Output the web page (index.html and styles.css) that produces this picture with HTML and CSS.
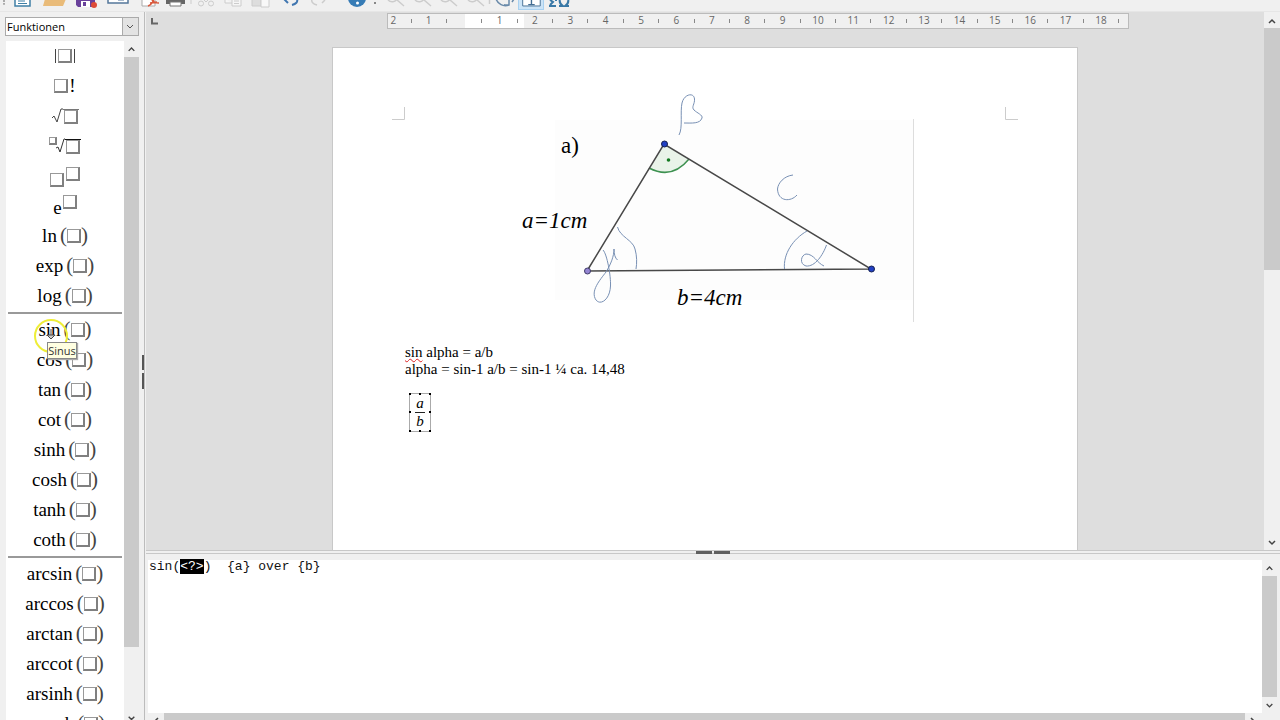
FILE: index.html
```
<!DOCTYPE html>
<html lang="de">
<head>
<meta charset="utf-8">
<title>Formel bearbeiten</title>
<link rel="stylesheet" href="styles.css">
</head>
<body>
<header class="toolbar">
  <span class="grip"></span>
  <button class="tool wide" aria-label="Neu"><svg viewBox="6 0 32 11"><path d="M15 -2V6H30V-2" fill="#fff" stroke="#3f7fa5" stroke-width="1.5"/><path d="M18 1h7M18 3.500h9" stroke="#3f7fa5"/></svg></button>
  <button class="tool wide" aria-label="Öffnen"><svg viewBox="38 0 32 11"><path d="M45 -1H66L63 6H43Z" fill="#e9bb79"/></svg></button>
  <button class="tool wide" aria-label="Speichern"><svg viewBox="70 0 32 11"><path d="M76 -1H95V7H78L76 5Z" fill="#69419b"/><path d="M81 1h9v6h-9z" fill="#fff"/><path d="M83 2h3v4h-3z" fill="#69419b"/><circle cx="94" cy="5" r="3" fill="#dd4b37"/></svg></button>
  <button class="tool wide" aria-label="E-Mail"><svg viewBox="102 0 32 11"><path d="M108 -2V3H128V-2" fill="#fff" stroke="#54779b" stroke-width="1.500"/><path d="M118 0h6" stroke="#54779b"/></svg></button>
  <button class="tool" aria-label="PDF exportieren"><svg viewBox="134 0 28 11"><path d="M142 -1V6H155V-1" fill="#fff" stroke="#aaa"/><path d="M148 6C151 5 153 2 154 -1M152 0C153 2 156 3 159 3M150 3l7-1" fill="none" stroke="#d9593d" stroke-width="1.500"/></svg></button>
  <button class="tool" aria-label="Drucken"><svg viewBox="162 0 28 11"><path d="M166 -1H185V4H166Z" fill="#666"/><path d="M170 2h11v4h-11z" fill="#fff" stroke="#777"/></svg></button>
  <button class="tool" aria-label="Ausschneiden"><svg viewBox="190 0 28 11" fill="none" stroke="#ccc"><path d="M191 0v4M203 -1L206 2L209 -1"/><circle cx="201" cy="3.500" r="2.500"/><circle cx="211" cy="3.500" r="2.500"/></svg></button>
  <button class="tool" aria-label="Kopieren"><svg viewBox="218 0 28 11" fill="#f6f6f6" stroke="#ccc"><path d="M225 -1V3H232M232 -1H241V6H232ZM234 1h5M234 3.500h5"/></svg></button>
  <button class="tool" aria-label="Einfügen"><svg viewBox="246 0 28 11" stroke="#ccc"><path d="M252 -1V6H261V-1Z" fill="#ddd"/><path d="M261 -1H269V7H261Z" fill="#f8f8f8"/></svg></button>
  <button class="tool" aria-label="Rückgängig"><svg viewBox="274 0 28 11" fill="none" stroke="#4076b0" stroke-width="2"><path d="M284 -1L288 3M297 -1C298 2 296 4 292 5"/></svg></button>
  <button class="tool" aria-label="Wiederholen"><svg viewBox="302 0 28 11" fill="none" stroke="#ccc" stroke-width="1.500"><path d="M312 -1C311 2 313 4 317 5M325 0L322 3"/></svg></button>
  <span class="divider"></span>
  <button class="tool" aria-label="Suchen"><svg viewBox="342 0 28 11"><circle cx="357" cy="-2" r="9" fill="#377cb6"/><circle cx="357.500" cy="3" r="1.500" fill="#fff"/></svg></button>
  <span class="grip second"></span>
  <button class="tool" aria-label="Vergrößern"><svg viewBox="380 0 28 11" fill="none" stroke="#ccc" stroke-width="1.500"><path d="M388 0C391 3 395 2 397 -1M397 0L404 6"/></svg></button>
  <button class="tool" aria-label="Verkleinern"><svg viewBox="408 0 28 11" fill="none" stroke="#ccc" stroke-width="1.500"><path d="M415 0C418 3 422 2 424 -1M424 0L431 6"/></svg></button>
  <button class="tool" aria-label="Zoom 100%"><svg viewBox="436 0 28 11" fill="none" stroke="#ccc" stroke-width="1.500"><path d="M441 0C444 3 448 2 450 -1M450 0L457 6"/></svg></button>
  <button class="tool" aria-label="Alles zeigen"><svg viewBox="464 0 28 11" fill="none" stroke="#ccc" stroke-width="1.500"><path d="M468 0C471 3 475 2 477 -1M477 0L484 6M489.500 -1V4" /></svg></button>
  <button class="tool narrow" aria-label="Aktualisieren"><svg viewBox="492 0 26 11" fill="none" stroke="#6889a9" stroke-width="1.500"><path d="M496 -1C498 4 503 7 509 5V0M509 5H504M512 2L514 -1"/></svg></button>
  <button class="tool narrow active" aria-label="Formelcursor"><svg viewBox="518 0 26 11"><path d="M522 -1H541V6H522Z" fill="#fff" stroke="#426d93"/><path d="M531.500 -1V4M528 4.500H535" stroke="#426d93" stroke-width="1.500"/></svg></button>
  <button class="tool" aria-label="Symbole"><svg viewBox="544 0 28 11" fill="none" stroke="#3978a6" stroke-width="2"><path d="M549 6H556M550 0L553 2L550 5M556 0V1M559 6H563C560 4 559 2 560 -1M569 6H565C568 4 569 2 568 -1"/></svg></button>
</header>

<div class="main">
  <aside class="elements">
    <select class="category" aria-label="Kategorie"><option>Funktionen</option></select>
    <div class="list-area">
      <div class="list">
        <button class="item" aria-label="Betrag"><span class="bar"></span><i class="box"></i><span class="bar"></span></button>
        <button class="item"><i class="box"></i><span class="bang">!</span></button>
        <button class="item" aria-label="Quadratwurzel"><svg class="root" width="12" height="16" viewBox="0 0 12 16"><path d="M1 10L3 8L6 14L10 1H12" fill="none" stroke="#444"/></svg><span class="radicand"><i class="box"></i></span></button>
        <button class="item" aria-label="n-te Wurzel"><i class="box small"></i><svg class="root" width="12" height="16" viewBox="0 0 12 16"><path d="M3 10L5 9L7 14L11 1H12" fill="none" stroke="#333"/></svg><span class="radicand dark"><i class="box"></i></span></button>
        <button class="item" aria-label="Potenz"><i class="box low"></i><i class="box high"></i></button>
        <button class="item"><span class="base">e</span><i class="box high exponent"></i></button>
        <button class="item">ln<span class="paren open">(</span><i class="box"></i><span class="paren">)</span></button>
        <button class="item">exp<span class="paren open">(</span><i class="box"></i><span class="paren">)</span></button>
        <button class="item">log<span class="paren open">(</span><i class="box"></i><span class="paren">)</span></button>
        <hr class="rule">
        <button class="item">sin<span class="paren open">(</span><i class="box"></i><span class="paren">)</span></button>
        <button class="item">cos<span class="paren open">(</span><i class="box"></i><span class="paren">)</span></button>
        <button class="item">tan<span class="paren open">(</span><i class="box"></i><span class="paren">)</span></button>
        <button class="item">cot<span class="paren open">(</span><i class="box"></i><span class="paren">)</span></button>
        <button class="item">sinh<span class="paren open">(</span><i class="box"></i><span class="paren">)</span></button>
        <button class="item">cosh<span class="paren open">(</span><i class="box"></i><span class="paren">)</span></button>
        <button class="item">tanh<span class="paren open">(</span><i class="box"></i><span class="paren">)</span></button>
        <button class="item">coth<span class="paren open">(</span><i class="box"></i><span class="paren">)</span></button>
        <hr class="rule">
        <button class="item">arcsin<span class="paren open">(</span><i class="box"></i><span class="paren">)</span></button>
        <button class="item">arccos<span class="paren open">(</span><i class="box"></i><span class="paren">)</span></button>
        <button class="item">arctan<span class="paren open">(</span><i class="box"></i><span class="paren">)</span></button>
        <button class="item">arccot<span class="paren open">(</span><i class="box"></i><span class="paren">)</span></button>
        <button class="item">arsinh<span class="paren open">(</span><i class="box"></i><span class="paren">)</span></button>
        <button class="item">arcosh<span class="paren open">(</span><i class="box"></i><span class="paren">)</span></button>
      </div>
      <div class="vbar">
        <svg class="arrow" viewBox="0 0 16 16"><path d="M5 10L8 7L11 10"/></svg>
        <div class="thumb list-thumb"></div>
        <svg class="arrow end" viewBox="0 0 16 16"><path d="M5 13L8 16L11 13"/></svg>
      </div>
    </div>
    <span class="side-knob"></span>
    <svg class="pointer" width="36" height="36" viewBox="0 0 36 36"><circle cx="18" cy="18" r="16" fill="none" stroke="#eeee38" stroke-width="2"/><path d="M18 11V17M14 17L18 21L22 17Z" fill="#ccc" stroke="#444"/></svg>
    <span class="tooltip" role="tooltip">Sinus</span>
  </aside>

  <div class="workspace">
    <section class="document">
      <div class="canvas">
        <svg class="tab-mark" width="8" height="7" viewBox="0 0 8 7"><path d="M1 0V5.500H7" fill="none" stroke="#666" stroke-width="2"/></svg>
        <div class="ruler">
          <div class="scale">
            <span>2</span><i></i><span>1</span><i></i><span></span><i></i><span>1</span><i></i><span>2</span><i></i><span>3</span><i></i><span>4</span><i></i><span>5</span><i></i><span>6</span><i></i><span>7</span><i></i><span>8</span><i></i><span>9</span><i></i><span>10</span><i></i><span>11</span><i></i><span>12</span><i></i><span>13</span><i></i><span>14</span><i></i><span>15</span><i></i><span>16</span><i></i><span>17</span><i></i><span>18</span><i></i>
          </div>
        </div>
        <article class="page">
          <svg class="figure" viewBox="333 48 744 290">
            <g fill="none" stroke="#ccc"><path d="M404.500 107V119.500H392M1005.500 107V119.500H1018"/></g>
            <path d="M555 120H914V300H555Z" fill="#fdfdfd"/>
            <path d="M913.500 119V322" stroke="#ddd"/>
            <path d="M664 144L649 169Q671 179 688 159Z" fill="#e9f3e9"/>
            <path d="M649 168Q672 180 689 159" fill="none" stroke="#3d9150" stroke-width="1.500"/>
            <path d="M587 271L664 144L871 269Z" fill="none" stroke="#484848" stroke-width="1.500"/>
            <circle cx="668.500" cy="160" r="1.800" fill="#147a22"/>
            <circle cx="664.500" cy="144" r="3" fill="#2140c4" stroke="#152050"/>
            <circle cx="871.500" cy="269" r="3" fill="#2140c4" stroke="#152050"/>
            <circle cx="587.500" cy="271" r="3" fill="#9485d3" stroke="#403c68"/>
            <g fill="none" stroke="#7890b4">
              <path d="M679 135C683 128 680 112 682 103C684 94 694 92 694.500 99C695 104 691 107 694 110C697 113 703 115 702 118C700 124 692 123 684 123"/>
              <path d="M793 175C784 176 778 183 777.500 189C778 202 791 202 797 195"/>
              <path d="M617.500 227C620 237 633 240 635 249C637 256 637 263 636 269"/>
              <path d="M603 250C607 254 611 276 610.500 286C610 299 601 306 596 300C590 291 600 280 606 272C611 264 614 256 614 249C614 254 615 258 617.500 260"/>
              <path d="M807 231C793 239 783 254 784.500 269"/>
              <path d="M826.500 245C823 255 815 267 806 266C799 264 801 255 806 254C814 254 817 263 824 266"/>
            </g>
            <text class="label" x="561" y="153">a)</text>
            <text class="label slanted" x="522" y="228">a=1cm</text>
            <text class="label slanted" x="677" y="305">b=4cm</text>
          </svg>
          <p class="line"><span class="misspelt">sin</span> alpha = a/b</p>
          <p class="line">alpha = sin-1 a/b = sin-1 ¼ ca. 14,48</p>
          <div class="formula"><span class="numerator">a</span><span>b</span>
            <svg class="handles" viewBox="0 0 22 39"><path d="M0 0h2v2H0zM10 0h2v2h-2zM20 0h2v2h-2zM0 18h2v2H0zM20 18h2v2h-2zM0 37h2v2H0zM10 37h2v2h-2zM20 37h2v2h-2z"/></svg>
          </div>
        </article>
      </div>
      <div class="vbar">
        <svg class="arrow" viewBox="0 0 16 16"><path d="M5 11L8 8L11 11"/></svg>
        <div class="thumb doc-thumb"></div>
        <svg class="arrow end" viewBox="0 0 16 16"><path d="M5 7L8 10L11 7"/></svg>
      </div>
    </section>
    <div class="splitter"><span class="knob"></span><span class="knob"></span></div>
    <section class="command">
      <div class="command-row">
        <div class="editor" role="textbox" aria-multiline="true" aria-label="Formeltext" contenteditable="true" spellcheck="false">sin(<mark>&lt;?&gt;</mark>)  {a} over {b}</div>
        <div class="vbar">
          <svg class="arrow" viewBox="0 0 16 16"><path d="M5 10L8 7L11 10"/></svg>
          <div class="thumb fill"></div>
          <svg class="arrow" viewBox="0 0 16 16"><path d="M5 7L8 10L11 7"/></svg>
        </div>
      </div>
      <div class="hbar">
        <svg class="arrow" viewBox="0 0 16 16"><path d="M10 5L7 8L10 11"/></svg>
        <div class="thumb fill"></div>
        <svg class="arrow" viewBox="0 0 16 16"><path d="M6 5L9 8L6 11"/></svg>
      </div>
    </section>
  </div>
</div>
</body>
</html>
```

FILE: styles.css
```
* { box-sizing: border-box; }
body {
  margin: 0;
  height: 100vh;
  display: flex;
  flex-direction: column;
  overflow: hidden;
  background: #f0f0f0;
  color: #000;
  font-family: "Open Sans", "Noto Sans", sans-serif;
  font-size: 11px;
}
button { border: 0; padding: 0; margin: 0; background: none; color: inherit; }

/* Toolbar */
.toolbar { display: flex; flex: none; height: 12px; padding-left: 3px; overflow: hidden; border-bottom: 1px solid #e6e6e6; }
.grip { width: 3px; height: 5px; border-left: 2px dotted #aaa; }
.grip.second { width: 10px; border: 0; background: radial-gradient(circle, #888 1px, transparent 1px) center / 4px 4px no-repeat; }
.divider { width: 12px; }
.tool { width: 28px; height: 11px; flex: none; }
.tool svg { display: block; width: 100%; height: 11px; }
.tool.wide { width: 32px; }
.tool.narrow { width: 26px; }
.tool.active { height: 10px; overflow: hidden; background: #cce4f7; border: 1px solid #a9d1f0; border-top: 0; }

.main { display: flex; flex: 1; min-height: 0; }

/* Elements panel */
.elements { position: relative; flex: none; width: 145px; display: flex; flex-direction: column; gap: 5px; padding: 5px 5px 0 5px; border-right: 1px solid #bcbcbc; }
.category {
  flex: none;
  width: 134px;
  height: 19px;
  padding: 0 1px;
  border: 1px solid #aaa;
  border-radius: 0;
  appearance: none;
  color: #000;
  font: 11px "Open Sans", "Noto Sans", sans-serif;
  background: #fff url("data:image/svg+xml,%3Csvg xmlns='http://www.w3.org/2000/svg' width='16' height='17'%3E%3Crect width='16' height='17' fill='%23e3e3e3'/%3E%3Cpath d='M.5 0V17' stroke='%23aaa'/%3E%3Cpath d='M5 7l3 3 3-3' fill='none' stroke='%23555'/%3E%3C/svg%3E") right center no-repeat;
}
.list-area { display: flex; flex: 1; min-height: 0; width: 134px; padding-left: 1px; }
.list { flex: 1; overflow: hidden; background: #fff; }
.item { display: flex; align-items: center; justify-content: center; width: 100%; height: 30px; font: 19px/30px "Liberation Serif", serif; }
.paren { width: 7px; font-size: 21px; line-height: 26px; padding-bottom: 3px; text-align: center; color: #444; }
.paren.open { margin-left: 3px; }
.box { flex: none; width: 14px; height: 14px; border: 1px solid #999; border-right: 2px solid #808080; border-bottom: 2px solid #808080; background: #fff; }
.box.small { width: 8px; height: 8px; align-self: flex-start; margin: 6px -4px 0 0; }
.box.low { margin-top: 7px; }
.box.high { margin: 0 0 5px 2px; }
.box.exponent { margin: 0 0 9px 1px; }
.base { padding-top: 4px; }
.item .bar { width: 1px; height: 14px; margin: 0 2px; background: #444; }
.bang { margin-left: 1px; }
.radicand { border-top: 1px solid #777; padding: 0 1px; display: flex; }
.radicand.dark { border-color: #111; }
.rule { height: 2px; margin: 1px 2px; border: 0; background: #999; }
.side-knob { position: absolute; right: 0; top: 343px; width: 2px; height: 34px; background: linear-gradient(#555 0 15px, #eee 15px 18px, #555 18px); }
.pointer { position: absolute; left: 33px; top: 306px; }
.tooltip { position: absolute; left: 47px; top: 330px; width: 30px; height: 17px; border: 1px solid #888; background: #ffffe1; color: #333; line-height: 16px; text-align: center; box-shadow: 1px 1px 1px #aaa; }

/* Scroll bars */
.vbar { flex: none; width: 16px; display: flex; flex-direction: column; background: #f0f0f0; }
.hbar { flex: none; height: 16px; display: flex; background: #f0f0f0; }
.arrow { flex: none; width: 16px; height: 16px; fill: none; stroke: #444; stroke-width: 1.5; }
.arrow.end { margin-top: auto; }
.thumb { background: #cacaca; }
.thumb.fill { flex: 1; }
.list-area .vbar, .command .vbar { width: 15px; }
.list-area .arrow, .command .vbar .arrow { width: 15px; }
.list-thumb { flex: 0 1 590px; }
.doc-thumb { flex: 0 1 242px; }

/* Document */
.workspace { flex: 1; min-width: 0; display: flex; flex-direction: column; padding-left: 1px; }
.document { display: flex; flex: 1; min-height: 0; }
.canvas { position: relative; flex: 1; overflow: hidden; display: flex; flex-direction: column; align-items: center; gap: 19px; padding-top: 1px; background: #dedede; }
.tab-mark { position: absolute; left: 5px; top: 6px; }
.ruler { flex: none; width: 742px; height: 16px; margin-left: 105px; overflow: hidden; border: 1px solid #bbb; background: linear-gradient(90deg, #f0f0f0 77px, #fff 77px 136px, #f0f0f0 136px); }
.scale { display: grid; grid-template-columns: repeat(42, 1fr); width: 743px; margin-left: -3px; align-items: center; height: 13px; color: #666; font-size: 10px; line-height: 13px; text-align: center; }
.scale i { justify-self: center; width: 1px; height: 4px; background: #888; }
.page { flex: none; width: 744px; height: 800px; box-shadow: 0 0 0 1px #c8c8c8; background: #fff; font: 15px/17px "Liberation Serif", serif; }
.figure { display: block; width: 100%; height: 290px; margin-bottom: 6px; }
.label { font: 23px "Liberation Serif", serif; }
.label.slanted { font-style: italic; }
.line { margin: 0 0 0 72px; }
.misspelt { text-decoration: underline wavy #d22 1px; text-underline-offset: 1px; }
.formula { position: relative; width: 22px; height: 39px; margin: 15px 0 0 76px; padding-top: 1px; border: 1px solid #aaa; display: flex; flex-direction: column; align-items: center; font-style: italic; }
.numerator { width: 10px; text-align: center; border-bottom: 1px solid #222; }
.handles { position: absolute; left: -1px; top: -1px; width: 22px; height: 39px; }

.splitter { flex: none; height: 4px; display: flex; justify-content: center; gap: 2px; border: 1px solid #c8c8c8; border-width: 1px 0; }
.knob { width: 16px; height: 3px; background: #606060; }

/* Command window */
.command { flex: none; height: 166px; padding: 6px 3px 0 2px; overflow: hidden; }
.command-row { display: flex; height: 153px; }
.editor { flex: 1; padding-left: 1px; background: #fff; color: #111; font: 13px/14px "Liberation Mono", monospace; white-space: pre; outline: 0; }
.editor mark { background: #000; color: #fff; }
.command .hbar { padding-right: 16px; }
```
